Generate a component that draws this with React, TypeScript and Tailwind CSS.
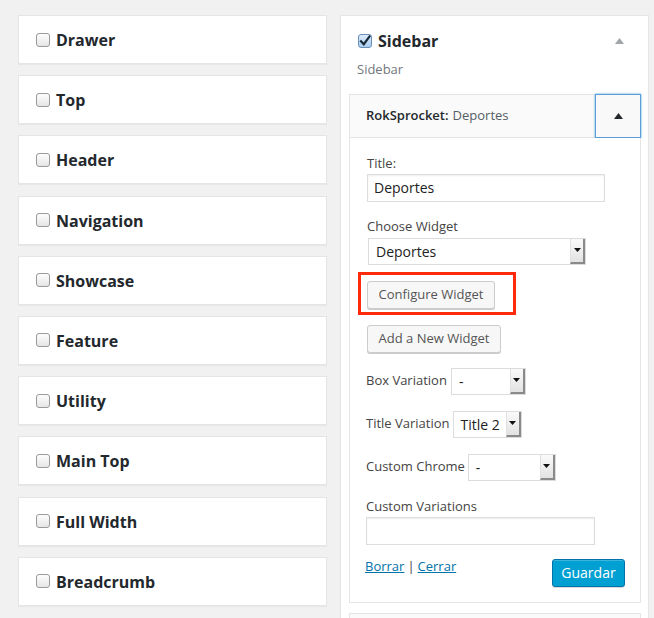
import React from "react";

const areas = [
  "Drawer",
  "Top",
  "Header",
  "Navigation",
  "Showcase",
  "Feature",
  "Utility",
  "Main Top",
  "Full Width",
  "Breadcrumb",
];

function Box({ checked = false }: { checked?: boolean }) {
  if (checked) {
    return (
      <span className="w-[14px] h-[14px] rounded-[3px] border border-[#6a8fb8] bg-gradient-to-b from-[#dcecfb] to-[#a9cdf0] flex items-center justify-center shrink-0">
        <svg width="12" height="12" viewBox="0 0 12 12">
          <path d="M2 6.2 L4.8 9.2 L10.5 1.5" fill="none" stroke="#1a2a3a" strokeWidth="2.2" strokeLinecap="square" />
        </svg>
      </span>
    );
  }
  return (
    <span className="w-[14px] h-[14px] rounded-[3px] border border-[#9a9a9a] bg-gradient-to-b from-[#fdfdfd] to-[#e6e6e6] shrink-0" />
  );
}

function Select({ value, w }: { value: string; w: string }) {
  return (
    <div className={`${w} h-[27px] flex border border-[#dcdcdc] bg-white`}>
      <div className="flex-1 flex items-center pl-[7px] text-[14px] text-[#222]">{value}</div>
      <div className="w-[15px] h-full flex items-center justify-center bg-gradient-to-b from-[#fafafa] to-[#e2e2e2] border-l border-l-[#e0e0e0] border-r-2 border-b-2 border-r-[#8a8a8a] border-b-[#8a8a8a]">
        <svg width="7" height="4" viewBox="0 0 7 4">
          <path d="M0 0 H7 L3.5 4 Z" fill="#111" />
        </svg>
      </div>
    </div>
  );
}

function Btn({ children, w }: { children: React.ReactNode; w: string }) {
  return (
    <div className={`${w} h-[28px] flex items-center justify-center rounded-[3px] border border-[#cccccc] bg-[#f7f7f7] shadow-[0_1px_0_#cccccc] text-[13px] text-[#555]`}>
      {children}
    </div>
  );
}

export default function App() {
  return (
    <div
      className="w-[654px] h-[618px] overflow-hidden bg-[#f1f1f1] flex items-start gap-[13px] pl-[18px] pt-[15px]"
      style={{ fontFamily: '"Open Sans", "Noto Sans", sans-serif' }}
    >
      <div className="w-[309px] flex flex-col gap-[11.2px] shrink-0">
        {areas.map((a) => (
          <div
            key={a}
            className="h-[49px] bg-white border border-[#e5e5e5] shadow-[0_1px_1px_rgba(0,0,0,0.04)] flex items-center pl-[17px] gap-[6px]"
          >
            <Box />
            <span className="text-[16px] font-bold text-[#23282d] leading-none mt-[1px]">{a}</span>
          </div>
        ))}
      </div>

      <div className="w-[309px] h-[620px] shrink-0 bg-white border border-[#e5e5e5] shadow-[0_1px_1px_rgba(0,0,0,0.04)] pt-[14.5px]">
        <div className="h-[20px] flex items-center justify-between pl-[17px] pr-[24px]">
          <div className="flex items-center gap-[6px]">
            <Box checked />
            <span className="text-[16px] font-bold text-[#23282d] leading-none">Sidebar</span>
          </div>
          <svg width="9" height="6" viewBox="0 0 9 6">
            <path d="M0 6 L4.5 0 L9 6 Z" fill="#a0a5aa" />
          </svg>
        </div>
        <div className="mt-[9px] pl-[16px] text-[13px] leading-[18px] text-[#72777c]">Sidebar</div>

        <div className="mt-[16px] ml-[8px] w-[292px] flex flex-col">
          <div className="h-[44px] flex items-stretch border border-[#e5e5e5] bg-[#fafafa]">
            <div className="flex-1 flex items-center pl-[16px] text-[13px]">
              <span className="font-semibold text-[#23282d]">RokSprocket:</span>
              <span className="ml-[4px] text-[#555d66]">Deportes</span>
            </div>
            <div className="w-[46px] -my-px -mr-px border border-[#5b9dd9] shadow-[0_0_2px_rgba(30,140,190,0.8)] bg-[#f9f9f9] flex items-center justify-center">
              <svg width="9" height="6" viewBox="0 0 9 6">
                <path d="M0 6 L4.5 0 L9 6 Z" fill="#23282d" />
              </svg>
            </div>
          </div>

          <div className="border border-t-0 border-[#e5e5e5] bg-white pl-[17px] pr-[15px] pt-[16px] pb-[15px] flex flex-col items-start text-[13px] text-[#444]">
            <div className="leading-[18px]">Title:</div>
            <div className="mt-[2px] w-[238px] h-[28px] border border-[#dddddd] shadow-[inset_0_1px_2px_rgba(0,0,0,0.07)] flex items-center pl-[6px] text-[14px] text-[#222]">
              Deportes
            </div>

            <div className="mt-[15px] leading-[18px]">Choose Widget</div>
            <div className="mt-[3px] ml-[1px]">
              <Select value="Deportes" w="w-[218px]" />
            </div>

            <div className="relative mt-[16px]">
              <Btn w="w-[128px]">Configure Widget</Btn>
              <div className="absolute left-[-9.5px] top-[-8.5px] w-[158px] h-[43px] border-[3px] border-[#ff2a0a] pointer-events-none" />
            </div>

            <div className="mt-[16px]">
              <Btn w="w-[134px]">Add a New Widget</Btn>
            </div>

            <div className="mt-[15px] flex items-center gap-[4px] -ml-[1px]">
              <span>Box Variation</span>
              <Select value="-" w="w-[75px]" />
            </div>
            <div className="mt-[16px] flex items-center gap-[3px] -ml-[1px]">
              <span>Title Variation</span>
              <Select value="Title 2" w="w-[69px]" />
            </div>
            <div className="mt-[16px] flex items-center gap-[3px] -ml-[1px]">
              <span>Custom Chrome</span>
              <Select value="-" w="w-[88px]" />
            </div>

            <div className="mt-[16px] leading-[18px] -ml-[1px]">Custom Variations</div>
            <div className="mt-[2px] -ml-[1px] w-[229px] h-[28px] border border-[#dddddd] shadow-[inset_0_1px_2px_rgba(0,0,0,0.07)]" />

            <div className="mt-[14px] w-full flex items-center justify-between">
              <div className="flex items-center gap-[3px] -mt-[12px] -ml-[2px]">
                <span className="text-[#0073aa] underline">Borrar</span>
                <span className="text-[#444]">|</span>
                <span className="text-[#0073aa] underline">Cerrar</span>
              </div>
              <div className="w-[73px] h-[28px] rounded-[3px] bg-[#00a0d2] border border-[#0073aa] shadow-[inset_0_1px_0_rgba(120,200,230,0.5),0_1px_0_rgba(0,0,0,0.15)] flex items-center justify-center text-[14px] text-white">
                Guardar
              </div>
            </div>
          </div>

          <div className="mt-[10px] h-[40px] border border-[#e5e5e5] bg-[#fafafa]" />
        </div>
      </div>
    </div>
  );
}
